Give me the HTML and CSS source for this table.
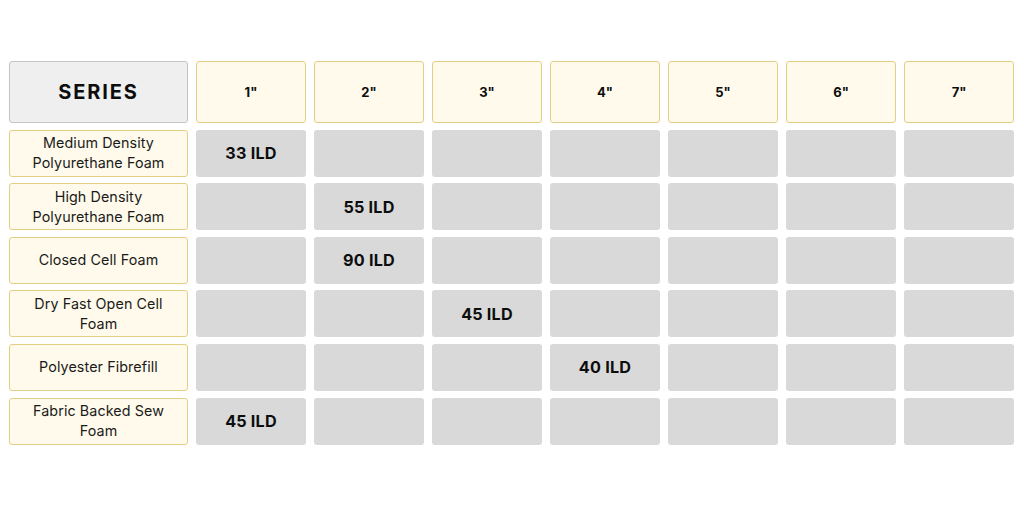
FILE: index.html
```html
<!DOCTYPE html>
<html>
<head>
<meta charset="utf-8">
<link rel="stylesheet" href="styles.css">
</head>
<body>
<div class="chart">
  <div class="cell series">SERIES</div>
  <div class="cell size">1"</div>
  <div class="cell size">2"</div>
  <div class="cell size">3"</div>
  <div class="cell size">4"</div>
  <div class="cell size">5"</div>
  <div class="cell size">6"</div>
  <div class="cell size">7"</div>

  <div class="cell label">Medium Density<br>Polyurethane Foam</div>
  <div class="cell val">33 ILD</div>
  <div class="cell val"></div>
  <div class="cell val"></div>
  <div class="cell val"></div>
  <div class="cell val"></div>
  <div class="cell val"></div>
  <div class="cell val"></div>

  <div class="cell label">High Density<br>Polyurethane Foam</div>
  <div class="cell val"></div>
  <div class="cell val">55 ILD</div>
  <div class="cell val"></div>
  <div class="cell val"></div>
  <div class="cell val"></div>
  <div class="cell val"></div>
  <div class="cell val"></div>

  <div class="cell label">Closed Cell Foam</div>
  <div class="cell val"></div>
  <div class="cell val">90 ILD</div>
  <div class="cell val"></div>
  <div class="cell val"></div>
  <div class="cell val"></div>
  <div class="cell val"></div>
  <div class="cell val"></div>

  <div class="cell label">Dry Fast Open Cell<br>Foam</div>
  <div class="cell val"></div>
  <div class="cell val"></div>
  <div class="cell val">45 ILD</div>
  <div class="cell val"></div>
  <div class="cell val"></div>
  <div class="cell val"></div>
  <div class="cell val"></div>

  <div class="cell label">Polyester Fibrefill</div>
  <div class="cell val"></div>
  <div class="cell val"></div>
  <div class="cell val"></div>
  <div class="cell val">40 ILD</div>
  <div class="cell val"></div>
  <div class="cell val"></div>
  <div class="cell val"></div>

  <div class="cell label">Fabric Backed Sew<br>Foam</div>
  <div class="cell val">45 ILD</div>
  <div class="cell val"></div>
  <div class="cell val"></div>
  <div class="cell val"></div>
  <div class="cell val"></div>
  <div class="cell val"></div>
  <div class="cell val"></div>
</div>
</body>
</html>
```
FILE: styles.css
```css
html, body {
  margin: 0;
  padding: 0;
  background: #ffffff;
}
body {
  font-family: Inter, "Liberation Sans", sans-serif;
  color: #111;
}
.chart {
  display: grid;
  grid-template-columns: 179px repeat(7, 110px);
  grid-template-rows: 62px repeat(6, 47px);
  column-gap: 8px;
  row-gap: 6.6px;
  padding: 61px 0 0 9px;
}
.cell {
  box-sizing: border-box;
  display: flex;
  align-items: center;
  justify-content: center;
  text-align: center;
  border-radius: 3px;
}
.series {
  background: #efefef;
  border: 1px solid #c4c4c4;
  font-size: 20px;
  font-weight: 700;
  letter-spacing: 1.9px;
  color: #0d0d0d;
}
.size {
  background: #fffaeb;
  border: 1px solid #e3cf84;
  font-size: 13px;
  font-weight: 700;
  color: #0d0d0d;
}
.label {
  background: #fffaeb;
  border: 1px solid #e3cf84;
  font-size: 14.3px;
  line-height: 20px;
  color: #1a1a1a;
  letter-spacing: 0.1px;
}
.val {
  background: #d9d9d9;
  font-size: 16.2px;
  font-weight: 700;
  letter-spacing: 0.2px;
  color: #0d0d0d;
}
```
